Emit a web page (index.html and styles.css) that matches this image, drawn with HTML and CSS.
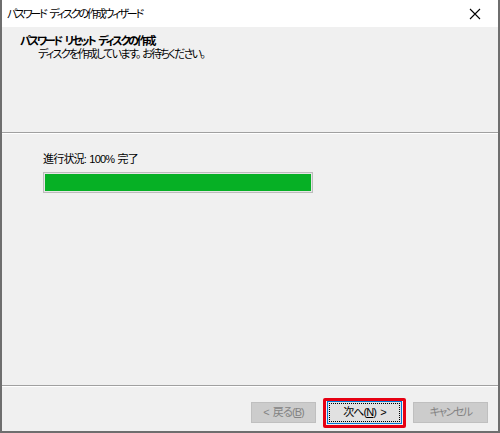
FILE: index.html
```html
<!DOCTYPE html>
<html lang="ja">
<head>
<meta charset="utf-8">
<link rel="stylesheet" href="styles.css">
</head>
<body>
<div class="window">
  <div class="titlebar">
    <span class="title">パスワード ディスクの作成ウィザード</span>
    <svg class="close" width="12" height="12" viewBox="0 0 12 12"><path d="M1 1L11 11M11 1L1 11" stroke="#000" stroke-width="1.1" fill="none"/></svg>
  </div>
  <div class="header">
    <div class="h-title">パスワード リセット ディスクの作成</div>
    <div class="h-sub">ディスクを作成しています。 お待ちください。</div>
  </div>
  <div class="sep"></div>
  <div class="content">
    <div class="label">進行状況: 100% 完了</div>
    <div class="progress"><div class="fill" style="width:100%"></div></div>
  </div>
  <div class="sep"></div>
  <div class="footer">
    <button class="btn disabled back">&lt; 戻る(<u>B</u>)</button>
    <button class="btn primary next"><span class="focus">次へ(<u>N</u>) &gt;</span><span class="mark"></span></button>
    <button class="btn disabled cancel">キャンセル</button>
  </div>
</div>
</body>
</html>
```

FILE: styles.css
```css
* { box-sizing: border-box; }
html, body { margin: 0; padding: 0; }
body {
  width: 500px;
  height: 433px;
  background: #f0f0f0;
  font-family: "Liberation Sans", "Noto Sans CJK JP", sans-serif;
  font-size: 11px;
  color: #000;
  font-feature-settings: "palt";
}
.window {
  width: 500px;
  height: 433px;
  border: 2px solid #6e6e6e;
  border-top: 0;
  display: flex;
  flex-direction: column;
  background: #f0f0f0;
}
.titlebar {
  height: 27px;
  background: #fff;
  display: flex;
  align-items: center;
  justify-content: space-between;
  padding: 0 17px 0 5px;
  flex: none;
}
.title { letter-spacing: -2.2px; word-spacing: 3px; line-height: 14px; }
.close { display: block; }
.header {
  height: 105px;
  flex: none;
  padding: 8px 0 0 18px;
  background: #f0f0f0;
}
.h-title { font-weight: bold; line-height: 13px; letter-spacing: -2.2px; word-spacing: 3px; }
.h-sub { padding-left: 18px; line-height: 13px; letter-spacing: -1.7px; word-spacing: 1px; }
.sep {
  height: 2px;
  flex: none;
  border-top: 1px solid #a0a0a0;
  border-bottom: 1px solid #ffffff;
}
.content {
  flex: 1;
  padding: 18px 0 0 41px;
}
.label { line-height: 14px; letter-spacing: -0.8px; word-spacing: 1px; }
.progress {
  margin-top: 6px;
  width: 270px;
  height: 21px;
  border: 1px solid #bcbcbc;
  background: #e6e6e6;
  padding: 1px;
}
.fill { height: 100%; background: #06b025; }
.footer {
  height: 44px;
  flex: none;
  display: flex;
  justify-content: flex-end;
  align-items: flex-start;
  padding: 15px 10px 0 0;
}
.btn {
  font-family: inherit;
  font-size: 11px;
  font-feature-settings: "palt";
  height: 21px;
  padding: 0;
  margin: 0;
  border: 1px solid #adadad;
  background: #e1e1e1;
  color: #000;
  position: relative;
  line-height: 17px;
  letter-spacing: -0.9px;
  word-spacing: 2px;
}
.btn u { text-underline-offset: 1px; }
.disabled { background: #cccccc; border-color: #bfbfbf; color: #838383; }
.back { width: 65px; margin-right: 11px; }
.next { width: 75px; height: 23px; margin-top: -1px; margin-right: 11px; border-color: #0078d7; border-width: 1px; padding: 1px; }
.next .focus {
  display: flex;
  align-items: center;
  justify-content: center;
  width: 100%;
  height: 100%;
  border: 1px dotted #000;
}
.cancel { width: 75px; letter-spacing: -1.6px; }
.mark {
  position: absolute;
  left: -5px;
  top: -4px;
  right: -5px;
  bottom: -5px;
  border: 3px solid #e60012;
  border-radius: 2px;
  pointer-events: none;
}
```
